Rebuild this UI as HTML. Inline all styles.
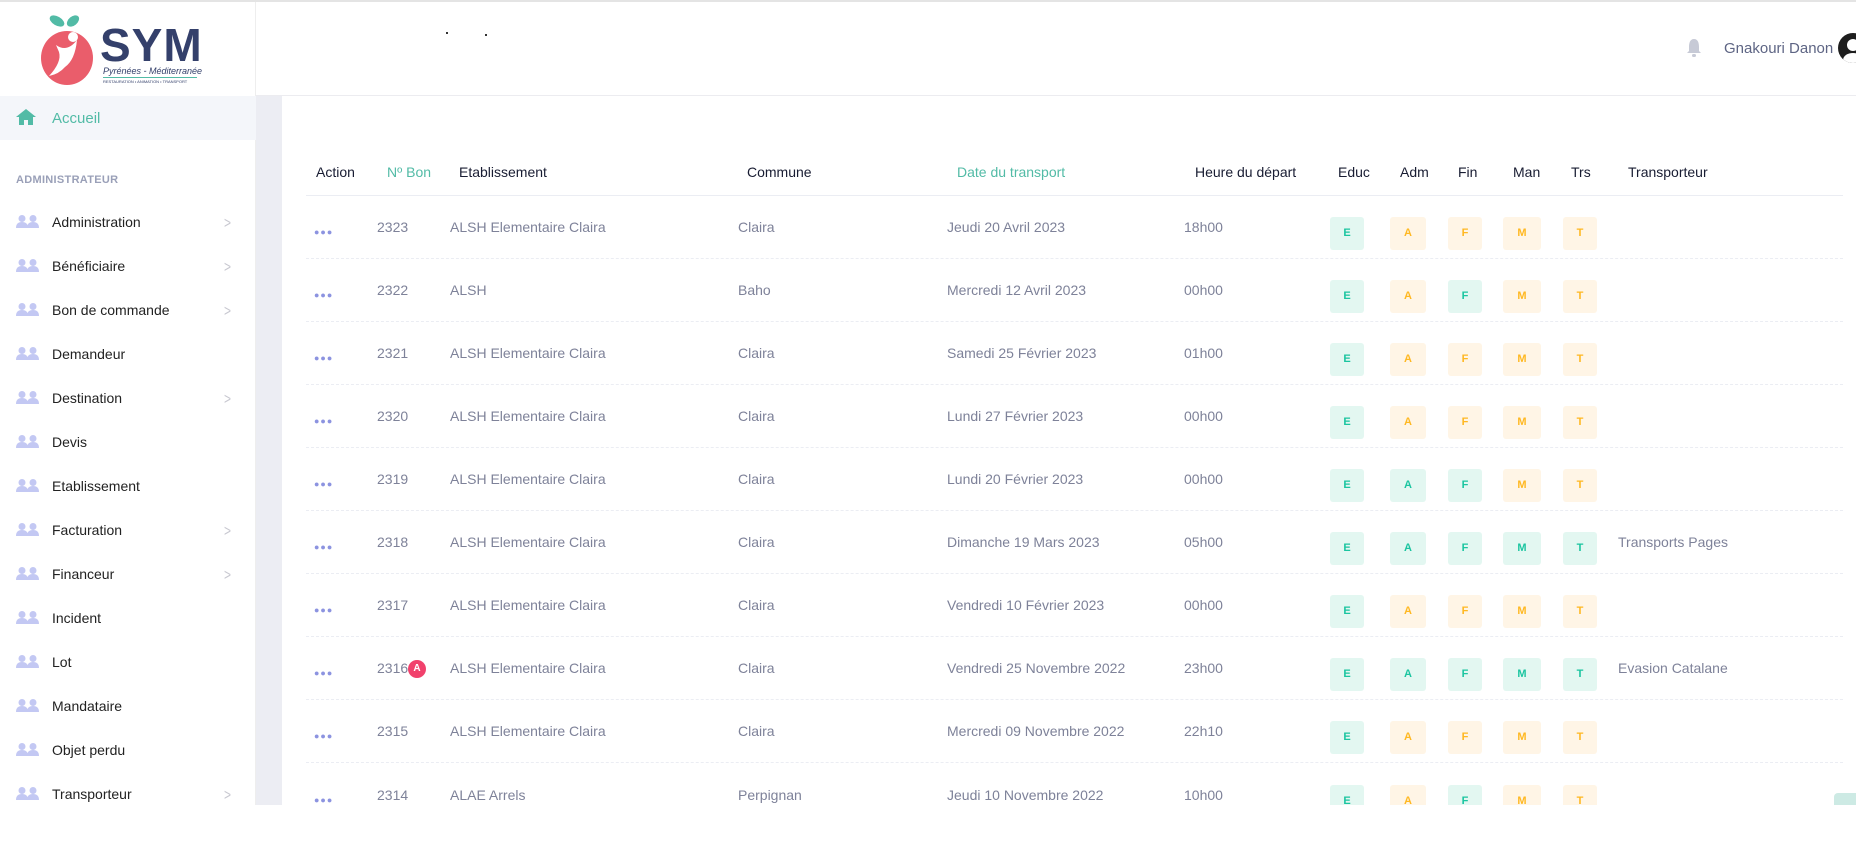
<!DOCTYPE html>
<html><head><meta charset="utf-8">
<style>
*{margin:0;padding:0;box-sizing:border-box}
body{width:1856px;height:850px;background:#fff;font-family:"Liberation Sans",sans-serif;position:relative;overflow:hidden}
.abs{position:absolute}
#top{left:0;top:0;width:1856px;height:2px;background:#e4e4e4}
#side{left:0;top:0;width:256px;height:805px;background:#fff;border-right:1px solid #eee}
#strip{left:256px;top:96px;width:26px;height:709px;background:#ecedf3}
#hdr{left:256px;top:2px;width:1600px;height:94px;border-bottom:1px solid #ececf0;background:#fff}
.mi{position:absolute;left:52px;font-size:14px;color:#222;white-space:nowrap}
.chev{position:absolute;left:224px;font-size:12px;color:#c8c8d0;transform:scaleY(1.3)}
.th{position:absolute;top:164px;font-size:14px;color:#181c32;white-space:nowrap}
.row{position:absolute;left:306px;width:1537px;height:63px;border-bottom:1px dashed #ebedf3}
.row span{position:absolute;top:23px;font-size:14px;color:#7e8299;white-space:nowrap}
.row .dots{top:31px;left:8px;color:#8c93e0;font-size:9px;letter-spacing:1px}
.b{position:absolute;top:21px;height:33px;border-radius:3px;font-size:11px;font-weight:bold;text-align:center;line-height:33px}
.g{background:#e3f7f1;color:#1bc5a0}
.o{background:#fff5e6;color:#ffb822}
.e{left:1024px;width:34px}.a{left:1084px;width:36px}.f{left:1142px;width:34px}.m{left:1197px;width:38px}.t{left:1257px;width:34px}
</style></head><body>
<div id="side" class="abs">
 <svg class="abs" style="left:40px;top:12px" width="56" height="74" viewBox="0 0 56 74">
  <ellipse cx="17" cy="9" rx="8" ry="4.5" fill="#52bba6" transform="rotate(30 17 9)"/>
  <ellipse cx="33" cy="9" rx="7" ry="4.5" fill="#52bba6" transform="rotate(-40 33 9)"/>
  <ellipse cx="27" cy="46" rx="26" ry="27" fill="#ea5d6b"/>
  <path d="M16 33 Q27 41 37 28 Q35 48 25 55 Q19 62 9 64 Q22 50 19 40Z" fill="#fff"/>
  <circle cx="33" cy="25" r="5" fill="#fff"/>
 </svg>
 <div class="abs" style="left:100px;top:22px;font-size:46px;font-weight:bold;color:#34406b;letter-spacing:1px;line-height:46px">SYM</div>
 <div class="abs" style="left:103px;top:66px;font-size:9px;color:#34406b;font-style:italic">Pyrénées - Méditerranée</div>
 <div class="abs" style="left:103px;top:77px;width:94px;height:1px;background:#52bba6"></div>
 <div class="abs" style="left:103px;top:79px;font-size:4px;color:#34406b">RESTAURATION • ANIMATION • TRANSPORT</div>
 <div class="abs" style="left:0;top:96px;width:256px;height:44px;background:#f4f6fa"></div>
 <svg class="abs" style="left:15px;top:108px" width="22" height="18" viewBox="0 0 22 18"><path d="M11 1 L1 9 H4 V17 H9 V12 H13 V17 H18 V9 H21Z" fill="#52bba6"/></svg>
 <div class="mi" style="top:110px;color:#52bba6;font-size:15px">Accueil</div>
 <div class="abs" style="left:16px;top:174px;font-size:11px;font-weight:bold;color:#9aa0b8;letter-spacing:.3px">ADMINISTRATEUR</div>
</div>
<div id="strip" class="abs"></div>
<div id="top" class="abs"></div>
<div id="hdr" class="abs"></div>
<div class="abs" style="left:446px;top:32px;width:2px;height:2px;background:#333"></div>
<div class="abs" style="left:485px;top:34px;width:2px;height:2px;background:#333"></div>
<svg class="abs" style="left:1686px;top:38px" width="16" height="20" viewBox="0 0 16 20"><path d="M8 1 C4 1 3 5 3 9 V13 L1 15 H15 L13 13 V9 C13 5 12 1 8 1Z" fill="#c7cad6"/><rect x="6" y="16" width="4" height="3" rx="1.5" fill="#c7cad6"/></svg>
<div class="abs" style="left:1724px;top:40px;font-size:15px;color:#5e6584">Gnakouri Danon</div>
<div class="abs" style="left:1838px;top:33px;width:30px;height:30px;border-radius:50%;background:#1e1e1e;overflow:hidden"><div class="abs" style="left:9px;top:6px;width:12px;height:12px;border-radius:50%;background:#fff"></div><div class="abs" style="left:5px;top:20px;width:20px;height:14px;border-radius:50%;background:#fff"></div></div>

<div class="abs" style="left:0;top:0">
 <div class="mi" style="top:214px">Administration</div><div class="chev" style="top:216px">&gt;</div>
 <div class="mi" style="top:258px">Bénéficiaire</div><div class="chev" style="top:260px">&gt;</div>
 <div class="mi" style="top:302px">Bon de commande</div><div class="chev" style="top:304px">&gt;</div>
 <div class="mi" style="top:346px">Demandeur</div>
 <div class="mi" style="top:390px">Destination</div><div class="chev" style="top:392px">&gt;</div>
 <div class="mi" style="top:434px">Devis</div>
 <div class="mi" style="top:478px">Etablissement</div>
 <div class="mi" style="top:522px">Facturation</div><div class="chev" style="top:524px">&gt;</div>
 <div class="mi" style="top:566px">Financeur</div><div class="chev" style="top:568px">&gt;</div>
 <div class="mi" style="top:610px">Incident</div>
 <div class="mi" style="top:654px">Lot</div>
 <div class="mi" style="top:698px">Mandataire</div>
 <div class="mi" style="top:742px">Objet perdu</div>
 <div class="mi" style="top:786px">Transporteur</div><div class="chev" style="top:788px">&gt;</div>
</div>
<svg class="abs" style="left:16px;top:0" width="24" height="805" viewBox="0 0 24 805">
 <defs><g id="u"><circle cx="6" cy="3.5" r="3.5" fill="#c3c8f3"/><circle cx="17" cy="3.5" r="3.5" fill="#c3c8f3"/><path d="M0 13 Q0 7 6 7 Q12 7 12 13Z M11 13 Q11 7 17 7 Q23 7 23 13Z" fill="#c3c8f3"/></g></defs>
 <use href="#u" y="215"/><use href="#u" y="259"/><use href="#u" y="303"/><use href="#u" y="347"/><use href="#u" y="391"/><use href="#u" y="435"/><use href="#u" y="479"/><use href="#u" y="523"/><use href="#u" y="567"/><use href="#u" y="611"/><use href="#u" y="655"/><use href="#u" y="699"/><use href="#u" y="743"/><use href="#u" y="787"/>
</svg>

<div class="th" style="left:316px">Action</div>
<div class="th" style="left:387px;color:#52bba6">Nº Bon</div>
<div class="th" style="left:459px">Etablissement</div>
<div class="th" style="left:747px">Commune</div>
<div class="th" style="left:957px;color:#52bba6">Date du transport</div>
<div class="th" style="left:1195px">Heure du départ</div>
<div class="th" style="left:1338px">Educ</div>
<div class="th" style="left:1400px">Adm</div>
<div class="th" style="left:1458px">Fin</div>
<div class="th" style="left:1513px">Man</div>
<div class="th" style="left:1571px">Trs</div>
<div class="th" style="left:1628px">Transporteur</div>
<div class="abs" style="left:306px;top:195px;width:1537px;height:1px;background:#ebedf3"></div>

<div class="abs" style="left:0;top:0;width:1856px;height:805px;overflow:hidden">
<div class="row" style="top:196px"><span class="dots">●●●</span><span style="left:71px">2323</span><span style="left:144px">ALSH Elementaire Claira</span><span style="left:432px">Claira</span><span style="left:641px">Jeudi 20 Avril 2023</span><span style="left:878px">18h00</span><div class="b g e">E</div><div class="b o a">A</div><div class="b o f">F</div><div class="b o m">M</div><div class="b o t">T</div></div>
<div class="row" style="top:259px"><span class="dots">●●●</span><span style="left:71px">2322</span><span style="left:144px">ALSH</span><span style="left:432px">Baho</span><span style="left:641px">Mercredi 12 Avril 2023</span><span style="left:878px">00h00</span><div class="b g e">E</div><div class="b o a">A</div><div class="b g f">F</div><div class="b o m">M</div><div class="b o t">T</div></div>
<div class="row" style="top:322px"><span class="dots">●●●</span><span style="left:71px">2321</span><span style="left:144px">ALSH Elementaire Claira</span><span style="left:432px">Claira</span><span style="left:641px">Samedi 25 Février 2023</span><span style="left:878px">01h00</span><div class="b g e">E</div><div class="b o a">A</div><div class="b o f">F</div><div class="b o m">M</div><div class="b o t">T</div></div>
<div class="row" style="top:385px"><span class="dots">●●●</span><span style="left:71px">2320</span><span style="left:144px">ALSH Elementaire Claira</span><span style="left:432px">Claira</span><span style="left:641px">Lundi 27 Février 2023</span><span style="left:878px">00h00</span><div class="b g e">E</div><div class="b o a">A</div><div class="b o f">F</div><div class="b o m">M</div><div class="b o t">T</div></div>
<div class="row" style="top:448px"><span class="dots">●●●</span><span style="left:71px">2319</span><span style="left:144px">ALSH Elementaire Claira</span><span style="left:432px">Claira</span><span style="left:641px">Lundi 20 Février 2023</span><span style="left:878px">00h00</span><div class="b g e">E</div><div class="b g a">A</div><div class="b g f">F</div><div class="b o m">M</div><div class="b o t">T</div></div>
<div class="row" style="top:511px"><span class="dots">●●●</span><span style="left:71px">2318</span><span style="left:144px">ALSH Elementaire Claira</span><span style="left:432px">Claira</span><span style="left:641px">Dimanche 19 Mars 2023</span><span style="left:878px">05h00</span><div class="b g e">E</div><div class="b g a">A</div><div class="b g f">F</div><div class="b g m">M</div><div class="b g t">T</div><span style="left:1312px">Transports Pages</span></div>
<div class="row" style="top:574px"><span class="dots">●●●</span><span style="left:71px">2317</span><span style="left:144px">ALSH Elementaire Claira</span><span style="left:432px">Claira</span><span style="left:641px">Vendredi 10 Février 2023</span><span style="left:878px">00h00</span><div class="b g e">E</div><div class="b o a">A</div><div class="b o f">F</div><div class="b o m">M</div><div class="b o t">T</div></div>
<div class="row" style="top:637px"><span class="dots">●●●</span><span style="left:71px">2316</span><div class="abs" style="left:102px;top:23px;width:18px;height:18px;border-radius:50%;background:#f1416c;color:#fff;font-size:10px;font-weight:bold;text-align:center;line-height:18px">A</div><span style="left:144px">ALSH Elementaire Claira</span><span style="left:432px">Claira</span><span style="left:641px">Vendredi 25 Novembre 2022</span><span style="left:878px">23h00</span><div class="b g e">E</div><div class="b g a">A</div><div class="b g f">F</div><div class="b g m">M</div><div class="b g t">T</div><span style="left:1312px">Evasion Catalane</span></div>
<div class="row" style="top:700px"><span class="dots">●●●</span><span style="left:71px">2315</span><span style="left:144px">ALSH Elementaire Claira</span><span style="left:432px">Claira</span><span style="left:641px">Mercredi 09 Novembre 2022</span><span style="left:878px">22h10</span><div class="b g e">E</div><div class="b o a">A</div><div class="b o f">F</div><div class="b o m">M</div><div class="b o t">T</div></div>
<div class="row" style="top:764px;border:none"><span class="dots">●●●</span><span style="left:71px">2314</span><span style="left:144px">ALAE Arrels</span><span style="left:432px">Perpignan</span><span style="left:641px">Jeudi 10 Novembre 2022</span><span style="left:878px">10h00</span><div class="b g e">E</div><div class="b o a">A</div><div class="b g f">F</div><div class="b o m">M</div><div class="b o t">T</div></div>
<div class="abs" style="left:1834px;top:793px;width:30px;height:20px;border-radius:4px;background:#cdeae4"></div>
</div>
</body></html>
